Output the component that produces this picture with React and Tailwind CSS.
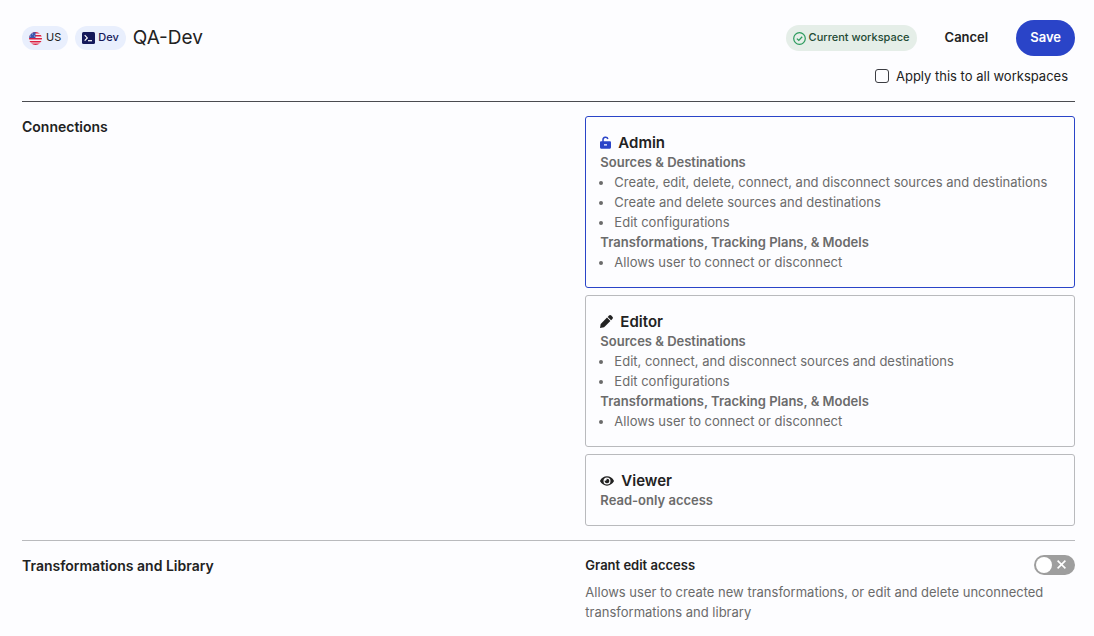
import React, { useState } from 'react';
import { FaEye } from 'react-icons/fa';

const FlagIcon = () => (
  <svg className="w-[13px] h-[13px] shrink-0" viewBox="0 0 26 26" aria-hidden="true">
    <defs>
      <clipPath id="flag-circle">
        <circle cx="13" cy="13" r="13" />
      </clipPath>
    </defs>
    <g clipPath="url(#flag-circle)">
      <rect width="26" height="26" fill="#f3eff5" />
      {[0, 6, 12, 18, 23].map((y) => (
        <rect key={y} x="0" y={y} width="26" height="3" fill="#dc1f42" />
      ))}
      <rect width="13" height="12" fill="#3c57ae" />
      {[3, 7, 11].map((x) => (
        <circle key={x} cx={x} cy={x === 7 ? 4 : 8} r="1" fill="#c9d1f2" />
      ))}
    </g>
  </svg>
);

const TerminalIcon = () => (
  <svg className="w-[13px] h-3 shrink-0" viewBox="0 0 13 12" fill="none" aria-hidden="true">
    <rect width="13" height="12" rx="1.5" fill="#14185a" />
    <path d="M2.7 3.2 5.3 5.9 2.7 8.6" stroke="#fff" strokeWidth="1.2" />
    <path d="M6 8.7h4" stroke="#fff" strokeWidth="1.2" />
  </svg>
);

const CheckIcon = () => (
  <svg className="w-[13px] h-[13px] shrink-0" viewBox="0 0 13 13" fill="none" stroke="#2a9a5c" aria-hidden="true">
    <circle cx="6.5" cy="6.5" r="5.8" strokeWidth="1.2" />
    <path d="m3.9 6.6 1.9 1.8 3.4-3.6" strokeWidth="1.3" />
  </svg>
);

const LockIcon = () => (
  <svg className="w-[11px] h-[13px] shrink-0" viewBox="0 0 11 13" fill="none" aria-hidden="true">
    <path d="M3 6V3.6a2.5 2.5 0 0 1 4.9-.6" stroke="#2a44c8" strokeWidth="1.5" />
    <path
      fillRule="evenodd"
      fill="#2a44c8"
      d="M1.2 5.3h8.6c.7 0 1.2.5 1.2 1.2v4.8c0 .9-.6 1.5-1.5 1.5h-8C.6 12.8 0 12.2 0 11.3V6.5c0-.7.5-1.2 1.2-1.2Zm2.8 3v1.300h3V8.300H4Z"
    />
  </svg>
);

const PencilIcon = () => (
  <svg className="w-[13px] h-[13px] shrink-0" viewBox="0 0 13 13" fill="#222" aria-hidden="true">
    <path d="M0 13 .7 8.900 7 2.600l3.400 3.400L4.100 12.300 0 13Z" />
    <path d="m7.700 1.900 1.300-1.300c.7-.7 1.600-.7 2.300 0l1.100 1.100c.7.7.7 1.600 0 2.300l-1.300 1.300-3.400-3.400Z" />
  </svg>
);

const EyeIcon = () => <FaEye className="w-[14px] h-[14px] shrink-0 text-[#222]" aria-hidden="true" />;

const roles = [
  {
    id: 'admin',
    title: 'Admin',
    icon: LockIcon,
    sections: [
      {
        heading: 'Sources & Destinations',
        items: [
          'Create, edit, delete, connect, and disconnect sources and destinations',
          'Create and delete sources and destinations',
          'Edit configurations'
        ]
      },
      {
        heading: 'Transformations, Tracking Plans, & Models',
        items: ['Allows user to connect or disconnect']
      }
    ]
  },
  {
    id: 'editor',
    title: 'Editor',
    icon: PencilIcon,
    sections: [
      {
        heading: 'Sources & Destinations',
        items: ['Edit, connect, and disconnect sources and destinations', 'Edit configurations']
      },
      {
        heading: 'Transformations, Tracking Plans, & Models',
        items: ['Allows user to connect or disconnect']
      }
    ]
  },
  {
    id: 'viewer',
    title: 'Viewer',
    icon: EyeIcon,
    sections: [{ heading: 'Read-only access', items: [] }]
  }
];

const RoleCard = ({ role, selected, onSelect }) => {
  const Icon = role.icon;

  return (
    <label
      className={`block cursor-pointer rounded-[3px] border px-[14px] pt-4 pb-[15px] ${
        selected ? 'border-[#2a44c8]' : 'border-[#b9babd]'
      }`}
    >
      <input
        type="radio"
        name="role"
        value={role.id}
        checked={selected}
        onChange={() => onSelect(role.id)}
        className="sr-only"
      />
      <div className="flex items-center gap-[7px]">
        <Icon />
        <h3 className="text-[15px] leading-[19px] font-semibold text-[#222]">{role.title}</h3>
      </div>
      {role.sections.map((section) => (
        <div key={section.heading} className="text-[13px] leading-5 text-[#6b6b6b]">
          <p className="font-semibold">{section.heading}</p>
          <ul className="list-disc pl-[14px]">
            {section.items.map((item) => (
              <li key={item}>{item}</li>
            ))}
          </ul>
        </div>
      ))}
    </label>
  );
};

const App = () => {
  const [role, setRole] = useState('admin');
  const [applyToAll, setApplyToAll] = useState(false);
  const [canEdit, setCanEdit] = useState(false);

  return (
    <main className="min-h-screen bg-[#fdfdff] pl-[22px] pr-[19px] pt-5 pb-4 font-['Inter',sans-serif] text-[#222]">
      {/* Header */}
      <header className="border-b border-[#4a4b50] pb-[15px]">
        <div className="flex items-center justify-between">
          <div className="flex items-center gap-[7px]">
            <span className="flex h-6 items-center gap-1 rounded-full bg-[#e9effd] px-[7px] text-[11px]">
              <FlagIcon />
              <span className="pb-0.5">US</span>
            </span>
            <span className="flex h-6 items-center gap-[3px] rounded-full bg-[#e9effd] px-[7px] text-[11px] font-medium text-[#14185a]">
              <TerminalIcon />
              <span className="pb-0.5">Dev</span>
            </span>
            <h1 className="text-[19px] leading-6">QA-Dev</h1>
          </div>
          <div className="flex items-center">
            <span className="flex h-[26px] items-center gap-[3px] rounded-full bg-[#e5eee8] px-[7px] text-[11px] font-medium text-[#1f4a35]">
              <CheckIcon />
              <span className="pb-0.5">Current workspace</span>
            </span>
            <button type="button" className="ml-[14px] h-9 px-[14px] text-[13px] font-semibold">
              Cancel
            </button>
            <button
              type="button"
              className="ml-[14px] h-9 rounded-full bg-[#2a44c8] px-[14px] text-[13px] font-semibold text-white"
            >
              Save
            </button>
          </div>
        </div>
        <label className="mt-[10px] flex items-center justify-end gap-[7px] pr-[7px] text-[13px] leading-5">
          <input
            type="checkbox"
            checked={applyToAll}
            onChange={(e) => setApplyToAll(e.target.checked)}
            className="size-[14px] appearance-none rounded-[3px] border border-[#3c3d42] checked:bg-[#2a44c8]"
          />
          Apply this to all workspaces
        </label>
      </header>

      {/* Connections */}
      <section className="flex justify-between border-b border-[#b9babd] pt-[14px] pb-[14px]">
        <h2 className="text-[14px] leading-[22px] font-semibold">Connections</h2>
        <div className="flex w-[46.5%] flex-col gap-[7px]">
          {roles.map((item) => (
            <RoleCard key={item.id} role={item} selected={role === item.id} onSelect={setRole} />
          ))}
        </div>
      </section>

      {/* Transformations */}
      <section className="flex justify-between pt-[14px]">
        <h2 className="text-[14px] leading-[22px] font-semibold">Transformations and Library</h2>
        <div className="w-[46.5%]">
          <div className="flex items-center justify-between">
            <span id="grant-label" className="text-[13px] leading-5 font-semibold">
              Grant edit access
            </span>
            <button
              type="button"
              role="switch"
              aria-checked={canEdit}
              aria-labelledby="grant-label"
              onClick={() => setCanEdit(!canEdit)}
              className={`flex h-5 w-[41px] items-center justify-between rounded-full pl-[2px] pr-[9px] ${
                canEdit ? 'flex-row-reverse bg-[#2a44c8]' : 'bg-[#9e9e9e]'
              }`}
            >
              <span className="size-4 rounded-full bg-white" />
              <svg className="h-[11px] w-[9px]" viewBox="0 0 9 11" stroke="#fff" strokeWidth="1.6" aria-hidden="true">
                <path d="m.6.6 7.800 7.800M8.400.6.6 8.400" />
              </svg>
            </button>
          </div>
          <p className="mt-[7px] text-[13px] leading-5 text-[#6b6b6b]">
            Allows user to create new transformations, or edit and delete unconnected transformations and library
          </p>
        </div>
      </section>
    </main>
  );
};

export default App;
